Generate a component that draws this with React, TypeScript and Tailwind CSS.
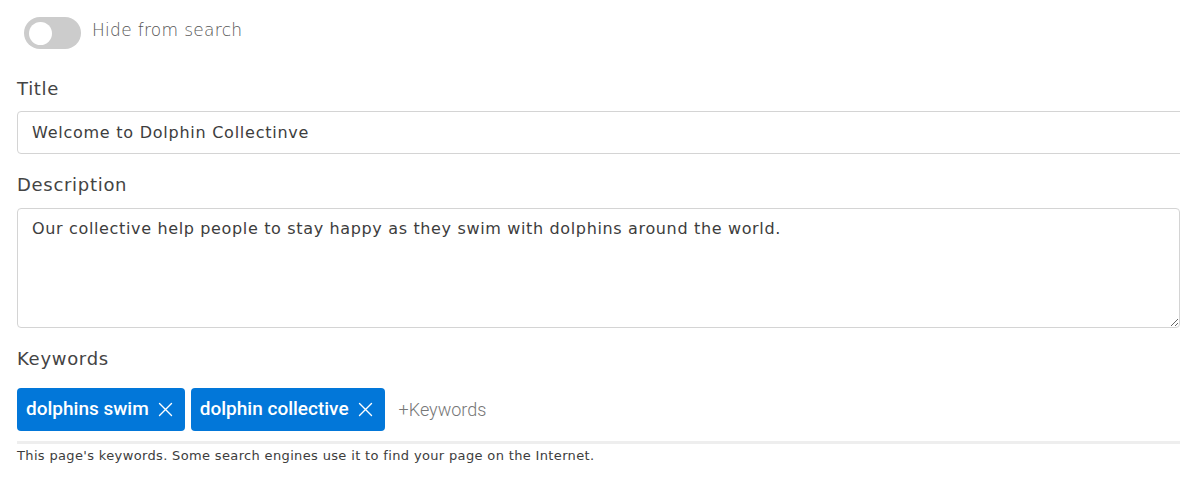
import React from "react";

const sans = { fontFamily: "'DejaVu Sans', Inter, sans-serif" };

function XIcon() {
  return (
    <svg width="15" height="15" viewBox="0 0 15 15" className="ml-[9px] shrink-0">
      <path d="M1.5 1.5 L13.5 13.5 M13.5 1.5 L1.5 13.5" stroke="white" strokeWidth="1.4" strokeLinecap="round" />
    </svg>
  );
}

function Chip({ label }: { label: string }) {
  return (
    <div className="flex h-[43px] items-center rounded-[4px] bg-[#0277d9] pl-[9px] pr-[12px] text-[19px] font-medium text-white" style={{ fontFamily: "Roboto, sans-serif" }}>
      <span>{label}</span>
      <XIcon />
    </div>
  );
}

export default function App() {
  return (
    <div className="h-[501px] w-[1180px] overflow-hidden bg-white pl-[17px]" style={sans}>
      <div className="w-[1200px]">
        <div className="flex items-center pt-[17px]">
          <div className="ml-[7px] flex h-[32px] w-[57px] items-center rounded-full bg-[#cccccc] pl-[5px]">
            <div className="h-[23px] w-[23px] rounded-full bg-white" />
          </div>
          <span className="ml-[11px] -mt-[5px] text-[17px] font-light tracking-[0.3px] text-[#555]">Hide from search</span>
        </div>

        <div className="mt-[26px] text-[18px] font-medium leading-[27px] tracking-[0.7px] text-[#444]">Title</div>
        <input
          readOnly
          value="Welcome to Dolphin Collectinve"
          className="mt-[9px] block h-[43px] w-full rounded-[4px] border border-[#d4d4d4] px-[14px] text-[16px] tracking-[0.75px] text-[#3d3d3d] outline-none"
          style={sans}
        />

        <div className="mt-[17px] text-[18px] font-medium leading-[27px] tracking-[0.7px] text-[#444]">Description</div>
        <textarea
          readOnly
          value="Our collective help people to stay happy as they swim with dolphins around the world."
          className="mt-[10px] block h-[120px] w-[1163px] rounded-[4px] border border-[#d4d4d4] px-[14px] pt-[8px] text-[16px] leading-[24px] tracking-[0.65px] text-[#3d3d3d] outline-none"
          style={sans}
        />

        <div className="mt-[17px] text-[18px] font-medium leading-[27px] tracking-[0.7px] text-[#444]">Keywords</div>
        <div className="mt-[16px] flex items-center gap-[6px] border-b-[3px] border-[#eeeeee] pb-[10px]">
          <Chip label="dolphins swim" />
          <Chip label="dolphin collective" />
          <span className="ml-[8px] text-[18px] font-light text-[#777]" style={{ fontFamily: "Roboto, sans-serif" }}>+Keywords</span>
        </div>
        <div className="mt-[3px] text-[13px] leading-[18px] tracking-[0.35px] text-[#3d3d3d]">
          This page's keywords. Some search engines use it to find your page on the Internet.
        </div>
      </div>
    </div>
  );
}
